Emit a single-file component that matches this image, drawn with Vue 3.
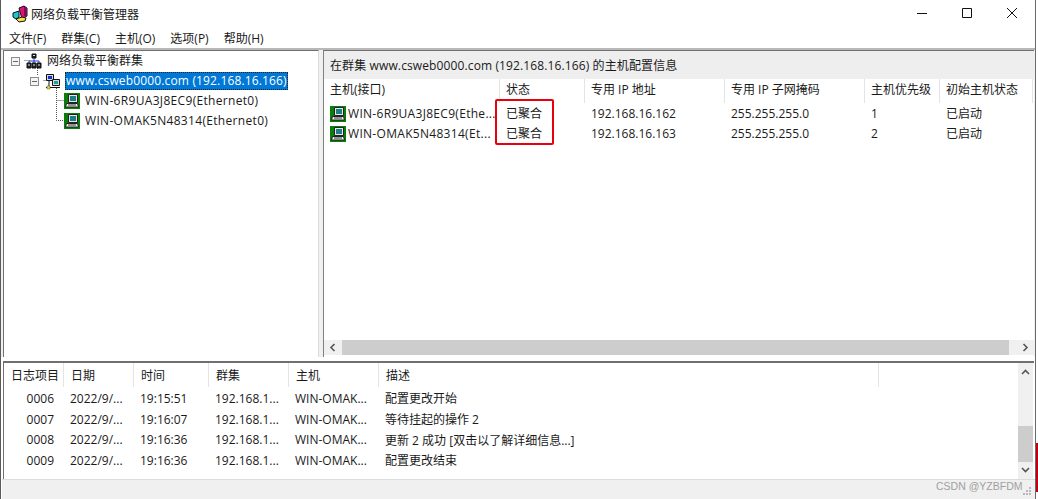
<script setup>
const menus = ['文件(F)', '群集(C)', '主机(O)', '选项(P)', '帮助(H)']
const hostCols = [
  { t: '主机(接口)', w: 176 }, { t: '状态', w: 85 }, { t: '专用 IP 地址', w: 140 },
  { t: '专用 IP 子网掩码', w: 140 }, { t: '主机优先级', w: 75 }, { t: '初始主机状态', w: 93 }
]
const hosts = [
  ['WIN-6R9UA3J8EC9(Ethe...', '已聚合', '192.168.16.162', '255.255.255.0', '1', '已启动'],
  ['WIN-OMAK5N48314(Et...', '已聚合', '192.168.16.163', '255.255.255.0', '2', '已启动']
]
const logCols = [
  { t: '日志项目', w: 60 }, { t: '日期', w: 70 }, { t: '时间', w: 75 }, { t: '群集', w: 80 },
  { t: '主机', w: 90 }, { t: '描述', w: 500 }
]
const logs = [
  ['0006', '2022/9/...', '19:15:51', '192.168.1...', 'WIN-OMAK...', '配置更改开始'],
  ['0007', '2022/9/...', '19:16:07', '192.168.1...', 'WIN-OMAK...', '等待挂起的操作 2'],
  ['0008', '2022/9/...', '19:16:36', '192.168.1...', 'WIN-OMAK...', '更新 2 成功 [双击以了解详细信息...]'],
  ['0009', '2022/9/...', '19:16:36', '192.168.1...', 'WIN-OMAK...', '配置更改结束']
]
const treeHosts = ['WIN-6R9UA3J8EC9(Ethernet0)', 'WIN-OMAK5N48314(Ethernet0)']
</script>

<template>
  <div class="shot">
    <div class="window">
      <header class="titlebar">
        <svg class="appicon" width="18" height="18" viewBox="0 0 18 18">
          <path d="M8 3l5-2 3 2v8l-5 3z" fill="#e0107a" stroke="#111" stroke-width="1"/>
          <path d="M2 8l6-2v6l-3 2-3-2z" fill="#18c8d8" stroke="#111" stroke-width="1"/>
          <path d="M5 14l6-2 4 1-1 3-6 1z" fill="#f4e43c" stroke="#111" stroke-width="1"/>
          <path d="M13 2h3v9h-3z" fill="#7a1050"/>
        </svg>
        <span class="title">网络负载平衡管理器</span>
        <div class="caption">
          <svg width="12" height="12" viewBox="0 0 12 12"><path d="M1 6.500h10" stroke="#111" fill="none"/></svg>
          <svg width="12" height="12" viewBox="0 0 12 12"><path d="M1.500 1.500h9v9h-9z" stroke="#111" fill="none"/></svg>
          <svg width="12" height="12" viewBox="0 0 12 12"><path d="M1 1l10 10M11 1L1 11" stroke="#111" fill="none"/></svg>
        </div>
      </header>

      <nav class="menubar">
        <span v-for="m in menus" :key="m" class="menu">{{ m }}</span>
      </nav>

      <div class="panes">
        <aside class="tree">
          <svg class="connectors" width="100" height="80" viewBox="0 0 100 80">
            <path d="M20.500 9.500h6M33.500 17v8M39.500 29.500h6M52.500 37v32.500h12M52.500 49.500h12" stroke="#555" stroke-dasharray="1 1" fill="none"/>
          </svg>
          <div class="tree-row root">
            <span class="expander"></span>
            <svg class="icon16" width="16" height="17" viewBox="0 0 16 17">
              <path d="M8 5v10M3 10V8h10v2" stroke="#1c3cd8" fill="none"/>
              <path d="M6 1h4v4H6zM1 10h4v5H1zM6 10h4v5H6zM11 10h4v5h-4z" fill="#222" stroke="#111"/>
              <path d="M2 12h2M7 12h2M12 12h2M7 2.500h2" stroke="#e6e6e6"/>
            </svg>
            <span class="tree-label">网络负载平衡群集</span>
          </div>
          <div class="tree-row cluster">
            <span class="expander"></span>
            <svg class="icon16" width="16" height="17" viewBox="0 0 16 17">
              <path d="M1.500 1.500h7v6h-7z" fill="#d8d8d8" stroke="#111"/>
              <path d="M3 3h4v3H3z" fill="#1030d0"/>
              <path d="M7.500 6.500h7v6h-7z" fill="#d8d8d8" stroke="#111"/>
              <path d="M9 8h4v3H9z" fill="#18a0a0"/>
              <path d="M1 14.500h14" stroke="#111"/>
              <path d="M4 8v6" stroke="#111"/>
              <path d="M2 13h3v3H2z" fill="#e8e020" stroke="#555" stroke-width=".5"/>
            </svg>
            <span class="tree-label selected">www.csweb0000.com (192.168.16.166)</span>
          </div>
          <div v-for="h in treeHosts" :key="h" class="tree-row host">
            <svg class="icon16" width="16" height="16" viewBox="0 0 16 16">
              <rect width="16" height="16" fill="#0a7d0a"/>
              <path d="M4.500 1.500h9v8h-9z" fill="#e6e6e6" stroke="#222"/>
              <path d="M6 3h6v5H6z" fill="#1c7f86"/>
              <path d="M2.500 10.500h11l1 3.500H1.500z" fill="#f2f2f2" stroke="#222"/>
              <path d="M4 12h8" stroke="#333"/>
            </svg>
            <span class="tree-label wide">{{ h }}</span>
          </div>
        </aside>

        <main class="detail">
          <div class="detail-title">在群集 www.csweb0000.com (192.168.16.166) 的主机配置信息</div>
          <div class="list">
            <div class="list-head">
              <span v-for="c in hostCols" :key="c.t" class="col-head" :style="{ width: c.w + 'px' }">{{ c.t }}</span>
            </div>
            <div v-for="row in hosts" :key="row[0]" class="list-row">
              <span v-for="(cell, i) in row" :key="i" class="cell" :class="{ wide: i === 0 }" :style="{ width: hostCols[i].w + 'px' }">
                <svg v-if="i === 0" class="row-icon" width="16" height="16" viewBox="0 0 16 16">
                  <rect width="16" height="16" fill="#0a7d0a"/>
                  <path d="M4.500 1.500h9v8h-9z" fill="#e6e6e6" stroke="#222"/>
                  <path d="M6 3h6v5H6z" fill="#1c7f86"/>
                  <path d="M2.500 10.500h11l1 3.500H1.500z" fill="#f2f2f2" stroke="#222"/>
                  <path d="M4 12h8" stroke="#333"/>
                </svg>
                {{ cell }}
              </span>
            </div>
            <div class="redbox"></div>
          </div>
          <div class="hscroll">
            <svg width="18" height="15" viewBox="0 0 18 15"><path d="M10.500 4l-3.500 3.500 3.500 3.500" stroke="#555" stroke-width="1.600" fill="none"/></svg>
            <div class="hthumb"></div>
            <svg width="18" height="15" viewBox="0 0 18 15"><path d="M7.500 4l3.500 3.500-3.500 3.500" stroke="#555" stroke-width="1.600" fill="none"/></svg>
          </div>
        </main>
      </div>

      <section class="log">
        <div class="log-table">
          <div class="log-head">
            <span v-for="c in logCols" :key="c.t" class="col-head log-col" :style="{ width: c.w + 'px' }">{{ c.t }}</span>
          </div>
          <div v-for="row in logs" :key="row[0]" class="log-row">
            <span v-for="(cell, i) in row" :key="i" class="log-cell" :class="{ num: i === 0 }" :style="{ width: logCols[i].w + 'px' }">{{ cell }}</span>
          </div>
        </div>
        <div class="vscroll">
          <svg width="15" height="17" viewBox="0 0 15 17"><path d="M4 11l3.500-3.500 3.500 3.500" stroke="#555" stroke-width="1.600" fill="none"/></svg>
          <div class="vthumb"></div>
          <svg width="15" height="17" viewBox="0 0 15 17"><path d="M4 6l3.500 3.500 3.500-3.500" stroke="#555" stroke-width="1.600" fill="none"/></svg>
        </div>
      </section>

      <footer class="statusbar">
        <span class="watermark">CSDN @YZBFDM</span>
        <svg class="grip" width="10" height="10" viewBox="0 0 10 10">
          <path d="M7 1h2v2H7zM4 4h2v2H4zM7 4h2v2H7zM1 7h2v2H1zM4 7h2v2H4zM7 7h2v2H7z" fill="#b8b8b8"/>
        </svg>
      </footer>
    </div>
    <div class="edge"><div class="edge-red"></div></div>
  </div>
</template>

<style>
html, body { margin: 0; background: #fff; }
</style>

<style scoped>
.shot {
  width: 1038px; height: 499px; display: flex; overflow: hidden; background: #fff;
  font-family: "Open Sans", "Noto Sans CJK SC", sans-serif; font-size: 12px; color: #1a1a1a;
}
.window { width: 1035px; height: 499px; box-sizing: border-box; border-left: 1px solid #5a5a5a; display: flex; flex-direction: column; background: #fff; }
.edge { width: 3px; border-left: 1px solid #6a6a6a; box-sizing: border-box; display: flex; flex-direction: column; justify-content: flex-end; padding-bottom: 7px; }
.edge-red { height: 49px; background: #c00010; }

.titlebar { height: 30px; flex: none; display: flex; align-items: center; padding-left: 10px; }
.appicon { margin-right: 2px; margin-top: -3px; }
.title { margin-top: -2px; }
.caption { margin-left: auto; display: flex; gap: 33px; padding-right: 17px; margin-top: -4px; }
.caption svg { display: block; }

.menubar { height: 18px; flex: none; display: flex; gap: 15px; padding-left: 8px; align-items: center; border-bottom: 2px solid #b8b8b8; }
.menu { line-height: 18px; }

.panes { height: 307px; flex: none; display: flex; background: #f0f0f0; padding: 0 1px 0 2px; box-sizing: border-box; }
.tree { position: relative; width: 316px; background: #fff; border-top: 1px solid #707070; border-left: 1px solid #707070; border-right: 1px solid #dcdcdc; box-sizing: border-box; flex: none; }
.connectors { position: absolute; left: 0; top: 0; }
.tree-row { height: 20px; display: flex; align-items: center; position: relative; }
.root { padding-left: 7px; }
.cluster { padding-left: 26px; }
.host { padding-left: 60px; }
.expander { width: 9px; height: 9px; box-sizing: border-box; border: 1px solid #8c8c8c; background: linear-gradient(#666, #666) center / 5px 1px no-repeat #f4f4f4; flex: none; }
.root .icon16 { margin-left: 6px; }
.cluster .icon16 { margin-left: 6px; }
.icon16 { flex: none; }
.tree-label { margin-left: 6px; line-height: 18px; white-space: nowrap; letter-spacing: .15px; }
.root .tree-label { margin-left: 5px; letter-spacing: 0; }
.host .tree-label { margin-left: 5px; }
.cluster .tree-label { margin-left: 4px; }
.wide { letter-spacing: .3px; }
.host .tree-label.wide { letter-spacing: .32px; }
.selected { background: #0078d7; color: #fff; outline: 1px dotted #222; outline-offset: -1px; padding: 0 1px; }

.detail { margin-left: 4px; flex: 1; min-width: 0; background: #fff; border-top: 1px solid #707070; border-left: 1px solid #808080; display: flex; flex-direction: column; }
.detail-title { height: 28px; flex: none; background: #eeeeee; line-height: 29px; padding-left: 6px; white-space: nowrap; letter-spacing: .12px; }
.list { flex: 1; position: relative; }
.list-head, .log-head { display: flex; height: 24px; }
.col-head { box-sizing: border-box; padding-left: 6px; border-right: 1px solid #e4e4e4; line-height: 22px; white-space: nowrap; flex: none; }
.list-row { display: flex; height: 20px; }
.list-head + .list-row { margin-top: 1px; }
.cell { box-sizing: border-box; padding-left: 6px; display: flex; align-items: center; gap: 2px; white-space: nowrap; flex: none; line-height: 20px; }
.row-icon { flex: none; }
.redbox { position: absolute; left: 171px; top: 20px; width: 59px; height: 46px; box-sizing: border-box; border: 2px solid #e8000c; border-radius: 2px; }
.hscroll { height: 15px; flex: none; margin-bottom: 2px; display: flex; align-items: center; background: #f0f0f0; }
.hthumb { flex: 1; height: 15px; background: #cdcdcd; margin-right: 7px; }
.hscroll svg { flex: none; }

.log { height: 118px; flex: none; display: flex; margin: 4px 1px 0 2px; border-top: 2px solid #707070; border-left: 1px solid #707070; box-sizing: border-box; background: #fff; }
.log-table { flex: 1; min-width: 0; }
.log-col { padding-left: 7px; line-height: 25px; }
.log-head { height: 24px; margin-bottom: 1px; }
.log-row { display: flex; height: 20.7px; align-items: center; }
.log-cell { box-sizing: border-box; padding-left: 6px; white-space: nowrap; flex: none; }
.num { text-align: right; padding: 0 10px 0 0; }
.vscroll { width: 15px; flex: none; margin-right: 1px; background: #f0f0f0; display: flex; flex-direction: column; justify-content: space-between; }
.vscroll svg { display: block; flex: none; }
.vthumb { height: 36px; background: #cdcdcd; margin-top: auto; }

.statusbar { flex: 1; position: relative; background: #f0f0f0; border-top: 1px solid #dcdcdc; margin-left: 1px; }
.watermark { position: absolute; left: 934px; top: 0; line-height: 12px; font-size: 10.500px; color: #a0a0a0; font-family: "Liberation Sans", sans-serif; white-space: nowrap; }
.grip { position: absolute; right: 3px; bottom: 3px; }
</style>
